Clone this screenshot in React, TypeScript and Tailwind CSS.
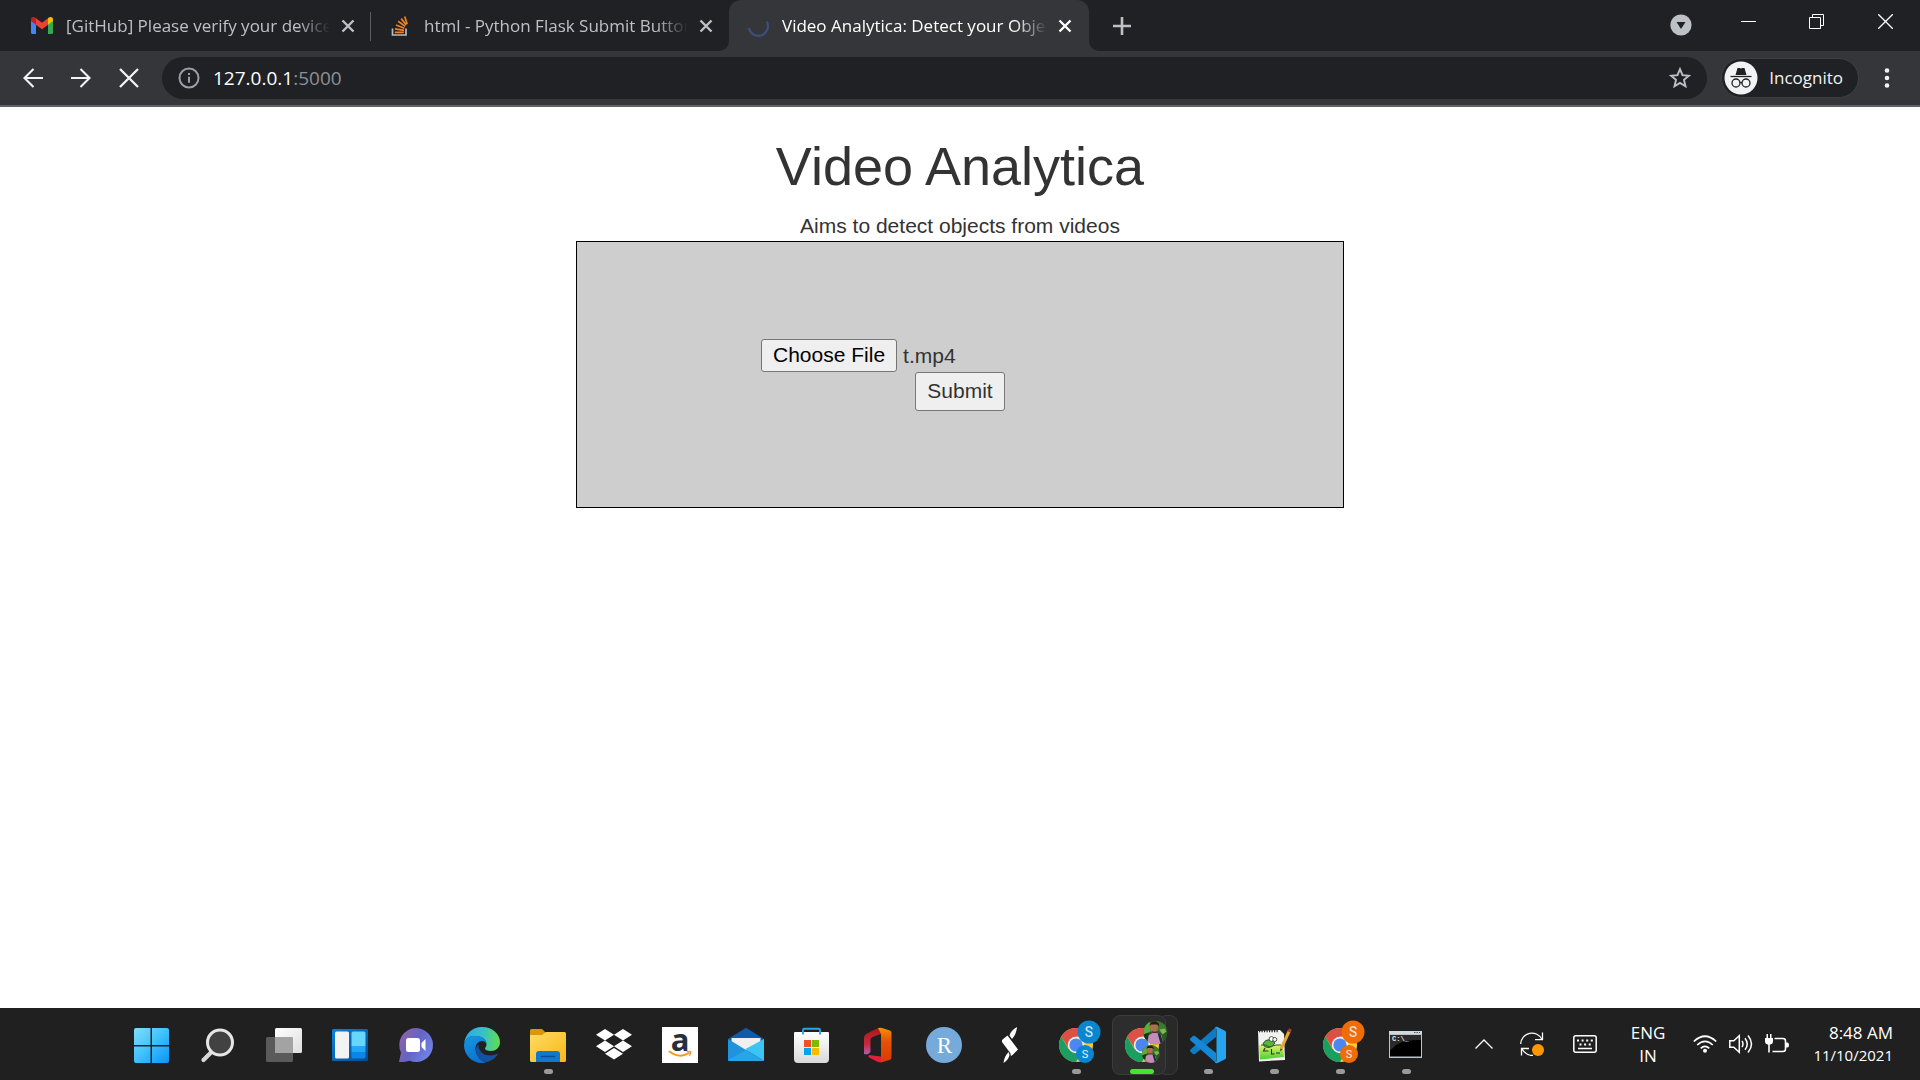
import { useState } from "react";
import type { ReactNode } from "react";

const UI = "font-['Open_Sans','Noto_Sans',sans-serif]";

function CloseGlyph() {
  return (
    <svg viewBox="0 0 14 14" className="size-[14px]" fill="none" stroke="currentColor" strokeWidth="2.4">
      <path d="M1.5 1.5l11 11M12.5 1.5l-11 11" />
    </svg>
  );
}

function GmailIcon() {
  return (
    <svg viewBox="0 0 22 17" className="h-[17px] w-[22px]">
      <path d="M0 3v12.500Q0 17 1.500 17H5V7z" fill="#4285f4" />
      <path d="M22 3v12.500Q22 17 20.500 17H17V7z" fill="#34a853" />
      <path d="M17 1.200L17 7.800 22 4V2.500C22 0 19.500-.6 17.800.6z" fill="#fbbc04" />
      <path d="M5 7.800V1.200L11 5.700 17 1.200V7.800L11 12.200z" fill="#ea4335" />
      <path d="M0 2.500V4l5 3.800V1.200L4.200.6C2.500-.6 0 0 0 2.500z" fill="#c5221f" />
    </svg>
  );
}

function StackOverflowIcon() {
  return (
    <svg viewBox="0 0 18 20" className="h-[20px] w-[18px]" fill="none" strokeWidth="1.700">
      <path d="M1.500 12.500V19h13.500v-6.500" stroke="#bcbbbb" />
      <path d="M3.800 16.400h9M4 12.800l9 1.500M5 9l8.300 3.300M7.200 5.200l7 5.200M10.200 2.600l5 6.300M13.700.6l2.500 7.600" stroke="#f48024" />
    </svg>
  );
}

function Spinner() {
  return (
    <svg viewBox="0 0 24 24" className="size-[24px]" fill="none" stroke="#3c4f7c" strokeWidth="2.400">
      <path d="M2 14A10.500 10.500 0 1 0 21.500 7" />
    </svg>
  );
}

function Tab({ icon, title, active = false, divider = false }: { icon: ReactNode; title: string; active?: boolean; divider?: boolean }) {
  return (
    <div
      className={
        active
          ? "relative flex h-full w-[360px] items-center rounded-t-xl bg-[#35363a] pr-[17px] pl-[18px] text-white"
          : "relative flex h-full w-[358px] items-center pr-[16px] pl-[18px] text-[#bdc1c6]"
      }
    >
      {active && (
        <>
          <svg viewBox="0 0 10 10" className="absolute bottom-0 -left-[10px] size-[10px]" fill="#35363a">
            <path d="M10 0v10H0A10 10 0 0 0 10 0z" />
          </svg>
          <svg viewBox="0 0 10 10" className="absolute -right-[10px] bottom-0 size-[10px]" fill="#35363a">
            <path d="M0 0v10h10A10 10 0 0 1 0 0z" />
          </svg>
        </>
      )}
      <span className="flex w-[22px] shrink-0 justify-center">{icon}</span>
      <span className="ml-[13px] min-w-0 flex-1 overflow-hidden text-[17px] leading-6 whitespace-nowrap [mask-image:linear-gradient(to_right,#000_88%,transparent)]">
        {title}
      </span>
      <button type="button" aria-label={`Close ${title}`} className="ml-[11px] shrink-0">
        <CloseGlyph />
      </button>
      {divider && <span className="absolute top-[12px] right-0 h-[29px] w-px bg-[#5a5d61]" />}
    </div>
  );
}

function TabStrip() {
  return (
    <div className="flex h-[51px] items-center bg-[#202124] pl-[13px]">
      <Tab icon={<GmailIcon />} title="[GitHub] Please verify your device" divider />
      <Tab icon={<StackOverflowIcon />} title="html - Python Flask Submit Button" />
      <Tab icon={<Spinner />} title="Video Analytica: Detect your Objects" active />
      <button type="button" aria-label="New tab" className="ml-[24px] text-[#bdc1c6]">
        <svg viewBox="0 0 18 18" className="size-[18px]" stroke="currentColor" strokeWidth="2.600">
          <path d="M9 0v18M0 9h18" />
        </svg>
      </button>
      <div className="ml-auto flex h-full items-start text-white">
        <button type="button" aria-label="Search tabs" className="mt-[14px] mr-[49px]">
          <svg viewBox="0 0 22 22" className="size-[22px]">
            <circle cx="11" cy="11" r="10.600" fill="#bdc1c6" />
            <path d="M6.500 8h9L11 15z" fill="#202124" />
          </svg>
        </button>
        <button type="button" aria-label="Minimize" className="mt-[14px] mr-[53px]">
          <svg viewBox="0 0 15 15" className="size-[15px]" stroke="currentColor">
            <path d="M0 7.500h15" />
          </svg>
        </button>
        <button type="button" aria-label="Restore" className="mt-[14px] mr-[54px]">
          <svg viewBox="0 0 15 15" className="size-[15px]" fill="none" stroke="currentColor">
            <path d="M.5 3.500h11v11H.5zM3.500 3.500v-3h11v11h-3" />
          </svg>
        </button>
        <button type="button" aria-label="Close window" className="mt-[14px] mr-[27px]">
          <svg viewBox="0 0 15 15" className="size-[15px]" stroke="currentColor" strokeWidth="1.300">
            <path d="M0 0l15 15M15 0L0 15" />
          </svg>
        </button>
      </div>
    </div>
  );
}

function Toolbar() {
  return (
    <div className="flex h-[56px] items-center border-b-2 border-[#5f6368] bg-[#35363a] pl-[23px] text-[#f1f3f4]">
      <button type="button" aria-label="Back" className="mr-[28px]">
        <svg viewBox="0 0 20 20" className="size-[20px]" fill="none" stroke="currentColor" strokeWidth="2.100">
          <path d="M20 10H1.500M10.500 1L1.500 10l9 9" />
        </svg>
      </button>
      <button type="button" aria-label="Forward" className="mr-[28px]">
        <svg viewBox="0 0 20 20" className="size-[20px]" fill="none" stroke="currentColor" strokeWidth="2.100">
          <path d="M0 10h18.500M9.500 1l9 9-9 9" />
        </svg>
      </button>
      <button type="button" aria-label="Stop loading" className="mr-[23px]">
        <svg viewBox="0 0 20 20" className="size-[20px]" stroke="currentColor" strokeWidth="2.300">
          <path d="M1 1l18 18M19 1L1 19" />
        </svg>
      </button>
      <div className="flex h-[42px] flex-1 items-center rounded-full bg-[#202124] pr-[16px] pl-[16px]">
        <svg viewBox="0 0 22 22" className="size-[22px]" fill="none" stroke="#9aa0a6" strokeWidth="2">
          <circle cx="11" cy="11" r="9.500" />
          <path d="M11 9.800v6M11 6v2" />
        </svg>
        <a href="http://127.0.0.1:5000" className="ml-[13px] text-[19px] leading-6 text-[#8d9196]">
          <span className="text-white">127.0.0.1</span>:5000
        </a>
        <button type="button" aria-label="Bookmark this tab" className="ml-auto">
          <svg viewBox="0 0 22 22" className="size-[22px]" fill="none" stroke="#bdc1c6" strokeWidth="1.900">
            <path d="M11 2.200l2.500 6 6.400.5-4.900 4.200 1.500 6.300L11 15.900l-5.500 3.300L7 12.900 2.100 8.700l6.400-.5z" />
          </svg>
        </button>
      </div>
      <button type="button" className="ml-[14px] flex h-[40px] items-center rounded-full border border-[#3c4043] bg-[#202124] pr-[15px] pl-[2px] text-[17px] leading-6">
        <svg viewBox="0 0 34 34" className="size-[34px]">
          <circle cx="17" cy="17" r="16.500" fill="#f1f3f4" />
          <path d="M11.500 14l2-7h2l1.500.6 1.500-.6h2l2 7z" fill="#202124" />
          <path d="M6.500 15.500h21" stroke="#202124" strokeWidth="1.300" />
          <g fill="none" stroke="#202124" strokeWidth="1.300">
            <circle cx="12" cy="22" r="4" />
            <circle cx="22" cy="22" r="4" />
            <path d="M16 21.700q1-.8 2 0" />
          </g>
        </svg>
        <span className="ml-[11px]">Incognito</span>
      </button>
      <button type="button" aria-label="Menu" className="mr-[23px] ml-[18px]">
        <svg viewBox="0 0 20 20" className="size-[20px]" fill="currentColor">
          <circle cx="10" cy="2.500" r="2.300" />
          <circle cx="10" cy="10" r="2.300" />
          <circle cx="10" cy="17.500" r="2.300" />
        </svg>
      </button>
    </div>
  );
}

function Page() {
  const [fileName, setFileName] = useState("t.mp4");
  return (
    <main className="flex-1 bg-white text-center font-['Liberation_Sans',Arial,sans-serif] text-[21px] leading-[30px] text-[#333]">
      <h1 className="pt-[30px] pb-[15px] text-[54px] leading-[59px]">Video Analytica</h1>
      <p>Aims to detect objects from videos</p>
      <form className="mx-auto w-2/5 border border-black bg-[#cecece] pt-[97px] pb-[96px]" onSubmit={(e) => e.preventDefault()}>
        <div className="mx-auto flex w-[398px] items-center">
          <input
            id="video"
            type="file"
            className="peer sr-only"
            onChange={(e) => setFileName(e.target.files?.[0]?.name ?? "No file chosen")}
          />
          <label htmlFor="video" className="h-[33px] rounded-[3px] border border-[#767676] bg-[#efefef] px-[11px] text-black">
            Choose File
          </label>
          <span className="ml-[6px]">{fileName}</span>
        </div>
        <button type="submit" className="mx-auto block h-[39px] rounded-[3px] border border-[#767676] bg-[#efefef] px-[11px] pb-[2px]">
          Submit
        </button>
      </form>
    </main>
  );
}

function Icon({ children }: { children: ReactNode }) {
  return (
    <svg viewBox="0 0 36 36" className="size-[36px] overflow-visible">
      {children}
    </svg>
  );
}

function ChromeDisc() {
  return (
    <>
      <circle cx="18" cy="18" r="17" fill="#fdc93c" />
      <path d="M3.300 9.500A17 17 0 0 1 32.700 9.500H18L11 22z" fill="#dc5046" />
      <path d="M3.300 9.500A17 17 0 0 0 18 35L25.400 22.200 18 18 10.600 22.200z" fill="#1a9f60" />
      <circle cx="18" cy="18" r="8.200" fill="#f1f1f1" />
      <circle cx="18" cy="18" r="6.600" fill="#4b87ee" />
    </>
  );
}

function ChromeProfile({ color }: { color: string }) {
  return (
    <Icon>
      <ChromeDisc />
      <circle cx="31" cy="5" r="11.500" fill={color} />
      <circle cx="27" cy="27" r="9" fill={color} />
      <g fill="#e8f1f8" textAnchor="middle" fontFamily="Roboto, sans-serif">
        <text x="31" y="10" fontSize="14" fontWeight="500" opacity=".85">S</text>
        <text x="27" y="31" fontSize="11">S</text>
      </g>
    </Icon>
  );
}

function Portrait() {
  return (
    <>
      <rect width="24" height="24" fill="#2a5a22" />
      <path d="M0 6l5-5 3 2-1 8-7 4z" fill="#62a83c" />
      <path d="M13 0l9 4 1 6-5 3-4-4z" fill="#3a7a2c" />
      <path d="M16 9l5-1 2 3-4 3z" fill="#86b05c" />
      <path d="M0 14l5-2 1 5-5 3z" fill="#18341a" />
      <path d="M6.500 6Q7 2.500 11 2.500T14.500 6l-.5 4.500q-1 2.500-3 2.500T7.500 11z" fill="#a8714f" />
      <path d="M6 6q0-5 5-5t4.500 5l-2-2h-6z" fill="#2a1914" />
      <path d="M8 10.500q3 1.500 6 0l-1.500 3h-3z" fill="#4c2c20" />
      <path d="M4 24l1-9 4-2.500h5l4 2.500 2 9z" fill="#c28cbb" />
      <path d="M14 12.500l3 1.500 3 9h-3z" fill="#24283c" />
    </>
  );
}

function ChromePhoto() {
  return (
    <Icon>
      <defs>
        <clipPath id="disc"><circle cx="12" cy="12" r="12" /></clipPath>
      </defs>
      <ChromeDisc />
      <g transform="translate(19.500 -6.500)" clipPath="url(#disc)"><Portrait /></g>
      <g transform="translate(18 18) scale(.75)" clipPath="url(#disc)"><Portrait /></g>
    </Icon>
  );
}

const START = (
  <Icon>
    <defs>
      <linearGradient id="win" x1="0" y1="1" x2="35" y2="36" gradientUnits="userSpaceOnUse">
        <stop stopColor="#84dcfc" /><stop offset=".45" stopColor="#43c5fb" /><stop offset="1" stopColor="#0a93fb" />
      </linearGradient>
    </defs>
    <path d="M2 1h14.500v17H0V3q0-2 2-2zM18 1h15q2 0 2 2v15H18zM0 19.500h16.500V36H2q-2 0-2-2zM18 19.500h17V34q0 2-2 2H18z" fill="url(#win)" />
  </Icon>
);

const SEARCH = (
  <Icon>
    <path d="M12 24.500L3.500 33" stroke="#d6d9dc" strokeWidth="4.200" strokeLinecap="round" />
    <circle cx="20" cy="15.500" r="12.500" fill="#424242" stroke="#e4e6e8" strokeWidth="3" />
  </Icon>
);

const TASK_VIEW = (
  <Icon>
    <defs>
      <linearGradient id="tv" x1="0" y1="0" x2="1" y2="1"><stop stopColor="#fff" /><stop offset="1" stopColor="#dedede" /></linearGradient>
    </defs>
    <rect y="10" width="27" height="25" rx="1.500" fill="#5a5a5a" />
    <rect x="9" y="1" width="27" height="25" rx="1.500" fill="url(#tv)" />
    <path d="M9 10h17q1 0 1 1v15H10q-1 0-1-1z" fill="#a3a3a3" />
  </Icon>
);

const WIDGETS = (
  <Icon>
    <defs>
      <linearGradient id="wg" x1="0" y1="0" x2="1" y2="1"><stop stopColor="#0a83de" /><stop offset="1" stopColor="#064a8e" /></linearGradient>
    </defs>
    <rect y="2" width="36" height="32" rx="1.500" fill="url(#wg)" />
    <rect x="3" y="4.500" width="14" height="27" rx="1.500" fill="#f3f3f3" />
    <path d="M21 4.500h11q1.500 0 1.500 1.500v13H19.500V6q0-1.500 1.500-1.500z" fill="#66d6fd" />
    <path d="M19.500 19h14v6h-14z" fill="#22a7f5" />
    <path d="M19.500 25h14v5q0 1.500-1.500 1.500H21q-1.500 0-1.500-1.500z" fill="#0a86ea" />
  </Icon>
);

const CHAT = (
  <Icon>
    <defs>
      <linearGradient id="ch" x1="1" y1="8" x2="33" y2="26" gradientUnits="userSpaceOnUse">
        <stop stopColor="#9163a5" /><stop offset=".5" stopColor="#6464c4" /><stop offset="1" stopColor="#6f83e8" />
      </linearGradient>
    </defs>
    <path d="M18 1a17 17 0 1 1-6.500 32.700Q8 35 1 35l2-9.500A17 17 0 0 1 18 1z" fill="url(#ch)" />
    <rect x="8" y="11" width="14" height="14" rx="2.500" fill="#fff" />
    <path d="M23.500 16l4-4v12l-4-4z" fill="#fff" />
  </Icon>
);

const EDGE = (
  <Icon>
    <defs>
      <linearGradient id="e1" x1="0" y1="10" x2="36" y2="14" gradientUnits="userSpaceOnUse">
        <stop stopColor="#2da7e8" /><stop offset=".5" stopColor="#35c1c9" /><stop offset="1" stopColor="#62dc4d" />
      </linearGradient>
      <linearGradient id="e2" x1="4" y1="12" x2="18" y2="36" gradientUnits="userSpaceOnUse">
        <stop stopColor="#1592df" /><stop offset="1" stopColor="#0b6dce" />
      </linearGradient>
    </defs>
    <path d="M0 17C1 7 8 0 18 0c11 0 18 7.500 18 15 0 6-4.500 9-9 9-4 0-6-1.200-6-2.500 0-1.200 1.500-1.500 1.500-4C22.500 12.500 18 9 11 9 5 9 1.500 12.500 0 17z" fill="url(#e1)" />
    <path d="M0 18C1 12 6 8.700 11.500 8.700c6 0 10.500 3.300 11 8.300-1-2-2.500-3-4.500-3-4 0-8 4.500-6 11 1.500 5 5 9 10 10.500-2 .5-3 .5-4 .5C8 36 0 28 0 18z" fill="url(#e2)" />
    <path d="M14.500 17.500C12 19 11 23 13 27.500c2 4.500 6 7.500 9.500 7.800 5-1.300 8.500-4 11-7.300.4-.8-.2-1.300-1-.9-2 1-4 1.400-6.500 1.400-7 0-12-5-11.500-11z" fill="#1352a0" />
  </Icon>
);

const FOLDER = (
  <Icon>
    <defs>
      <linearGradient id="fo" x1="0" y1="0" x2="1" y2="1"><stop stopColor="#ffdc66" /><stop offset="1" stopColor="#f8b716" /></linearGradient>
    </defs>
    <path d="M1.500 2H12l4 4v6H0V3.500Q0 2 1.500 2z" fill="#dc9706" />
    <path d="M0 8h12l4-3h18.500q1.500 0 1.500 1.500v27q0 1.500-1.500 1.500h-33Q0 35 0 33.500z" fill="url(#fo)" />
    <path d="M6 35v-8q0-3 3-3h18q3 0 3 3v8z" fill="#1278cf" />
    <path d="M11.500 29.500h13" stroke="#0b4d92" strokeWidth="1.500" strokeLinecap="round" />
  </Icon>
);

const DROPBOX = (
  <Icon>
    <path d="M9 2l9 5.700-9 5.700L0 7.700zM27 2l9 5.700-9 5.700-9-5.700zM9 13.500l9 5.700-9 5.700-9-5.700zM27 13.500l9 5.700-9 5.700-9-5.700zM18 21l9 5.700-9 5.700-9-5.700z" fill="#fff" />
  </Icon>
);

const AMAZON = (
  <Icon>
    <rect width="36" height="36" fill="#fff" />
    <text x="18" y="24" textAnchor="middle" fontSize="31" fontWeight="700" fontFamily="Open Sans, sans-serif" fill="#25303f">a</text>
    <path d="M7.500 24.500q10 7.500 19.500 1.500" fill="none" stroke="#f7981d" strokeWidth="2" strokeLinecap="round" />
    <path d="M24.500 24.800q4-1 4.300 0 .2 1.500-1.500 4" fill="none" stroke="#f7981d" strokeWidth="1.300" />
  </Icon>
);

const MAIL = (
  <Icon>
    <path d="M0 12L18 .8 36 12v6H0z" fill="#0d5cab" />
    <path d="M3.500 11h29v9L18 24 3.500 20z" fill="#f0f0f0" />
    <path d="M36 12v22L17 22.300z" fill="#3cc5f4" />
    <path d="M0 12l36 22H1.500Q0 34 0 32.500z" fill="#1f93dc" />
    <path d="M36 34L18 23 0 33q.4 1 1.500 1z" fill="#28a4e8" />
  </Icon>
);

const STORE = (
  <Icon>
    <defs>
      <linearGradient id="st" x1="0" y1="0" x2="0" y2="1"><stop stopColor="#fff" /><stop offset="1" stopColor="#d9d9d9" /></linearGradient>
    </defs>
    <path d="M1 5h33q1 0 1 1v26q0 4-4 4H4q-4 0-4-4V6q0-1 1-1z" fill="url(#st)" />
    <path d="M9 7.500V3q0-1.200 1.200-1.200h14.600Q26 1.800 26 3v4.500" fill="none" stroke="#26a6ea" strokeWidth="1.900" />
    <path d="M10 13h7v7h-7z" fill="#f25022" /><path d="M18 13h7v7h-7z" fill="#7fba00" />
    <path d="M10 21h7v7h-7z" fill="#00a4ef" /><path d="M18 21h7v7h-7z" fill="#ffb900" />
  </Icon>
);

const OFFICE = (
  <Icon>
    <defs>
      <linearGradient id="o1" x1="0" y1="0" x2="0" y2="1"><stop stopColor="#a81717" /><stop offset=".6" stopColor="#c42a3e" /><stop offset="1" stopColor="#b35cb0" /></linearGradient>
      <linearGradient id="o2" x1="0" y1="0" x2="0" y2="1"><stop stopColor="#f29100" /><stop offset=".4" stopColor="#e35205" /><stop offset="1" stopColor="#d83b01" /></linearGradient>
    </defs>
    <path d="M18 1L8 6Q4 8 4 11v16q4 1.500 6.500-2V13q0-2 2-3l8.500-3V1z" fill="url(#o1)" />
    <path d="M18 1q2-.6 4 0l8 2.500q1.500.6 1.500 2.500v24q0 2.300-2 3L21 35.500V7z" fill="url(#o2)" />
    <path d="M9 28l12 1.500v6q-2 0-3.500-.7L9 30.500q-1.500-1.500 0-2.500z" fill="#e3203b" />
  </Icon>
);

const RSTUDIO = (
  <Icon>
    <circle cx="18" cy="18" r="18" fill="#75aadb" />
    <text x="18.500" y="25.500" textAnchor="middle" fontSize="23" fontFamily="Liberation Serif, serif" fill="#fff">R</text>
  </Icon>
);

const STITCH = (
  <Icon>
    <path d="M10 13l5.500-4.500L26 22.500 20.500 28 19 29q0-3-3-6l-6-8z" fill="#fff" />
    <path d="M17.500 8.500Q19 3 25 0q-.5 7-5 12zM16.500 25q1 2 1 3.500Q16 33 11.500 36q.5-6 5-11z" fill="#fff" />
  </Icon>
);

const VSCODE = (
  <Icon>
    <path d="M26 0v10L5 27q-1 .6-2 0l-2.500-2.200q-1-1.300 0-2.300z" fill="#0f7bc4" />
    <path d="M26 36V26L5 9q-1-.6-2 0L.5 11.200q-1 1.300 0 2.300z" fill="#1488d4" />
    <path d="M26 0q.8-.4 1.500 0L35 3.700q1 .5 1 1.600v25.400q0 1.100-1 1.600L27.500 36q-1.500.5-2.800-.8 1.800.5 1.800-1.700v-31Q26.500.5 24.500 1z" fill="#25a5f0" />
  </Icon>
);

const NOTEPAD = (
  <Icon>
    <defs>
      <linearGradient id="np" x1="0" y1="0" x2="0" y2="1"><stop stopColor="#e8f26a" /><stop offset="1" stopColor="#42cf33" /></linearGradient>
    </defs>
    <path d="M2 4l22-1 4 4 1 26-26 1.500z" fill="#f2f2ee" />
    <path d="M3 18h24l1 12-24 2.500z" fill="url(#np)" />
    <path d="M3 4h20" stroke="#222" strokeWidth="2.500" strokeDasharray="1.200 1.300" />
    <path d="M7 17q2-5 8-4l4 3q-3 5-7 4.500-4 0-5-3.500z" fill="#52b83f" stroke="#2c5a1e" strokeWidth="1" />
    <path d="M5 18h5l3 2 7-2h5" fill="none" stroke="#3e5a22" strokeWidth="1" />
    <circle cx="15.500" cy="12" r="2.400" fill="#fff" stroke="#333" strokeWidth=".8" />
    <circle cx="18.800" cy="12.500" r="2" fill="#fff" stroke="#333" strokeWidth=".8" />
    <path d="M9 21l-1.500 3h5M15.500 22v5h3M20 26h4" fill="none" stroke="#25351c" strokeWidth="1.100" />
    <path d="M25 22L33.500 3.500" stroke="#e8a92b" strokeWidth="3" />
    <path d="M33 5l1.500-3" stroke="#b5342e" strokeWidth="3" />
    <path d="M24.200 24.500l.3-3 2 1z" fill="#333" />
  </Icon>
);

const TERMINAL = (
  <Icon>
    <rect x="1" y="4" width="33" height="27" fill="#b9c3ca" />
    <path d="M1 4h33v3H1z" fill="#cfd9de" />
    <path d="M26 5.500h6" stroke="#4b5a66" strokeDasharray="1.500 1" />
    <rect x="2" y="8" width="31" height="21.500" fill="#000" />
    <path d="M2 8h31v5Q12 12 5 21l-3 2z" fill="#2b2b2b" />
    <text x="4" y="14" fontSize="7" fontFamily="Liberation Mono, monospace" fontWeight="700" fill="#e8e8e8">C:\_</text>
  </Icon>
);

const APPS: { name: string; icon: ReactNode; running?: boolean; active?: boolean }[] = [
  { name: "Start", icon: START },
  { name: "Search", icon: SEARCH },
  { name: "Task view", icon: TASK_VIEW },
  { name: "Widgets", icon: WIDGETS },
  { name: "Chat", icon: CHAT },
  { name: "Edge", icon: EDGE },
  { name: "File Explorer", icon: FOLDER, running: true },
  { name: "Dropbox", icon: DROPBOX },
  { name: "Amazon", icon: AMAZON },
  { name: "Mail", icon: MAIL },
  { name: "Store", icon: STORE },
  { name: "Office", icon: OFFICE },
  { name: "RStudio", icon: RSTUDIO },
  { name: "Notes", icon: STITCH },
  { name: "Chrome, first profile", icon: <ChromeProfile color="#0a86d1" />, running: true },
  { name: "Chrome, current profile", icon: <ChromePhoto />, active: true },
  { name: "Visual Studio Code", icon: VSCODE, running: true },
  { name: "Notepad++", icon: NOTEPAD, running: true },
  { name: "Chrome, third profile", icon: <ChromeProfile color="#f06c05" />, running: true },
  { name: "Command Prompt", icon: TERMINAL, running: true },
];

function Tray() {
  return (
    <div className="ml-auto flex h-full items-center pr-[27px] text-white">
      <button type="button" aria-label="Show hidden icons" className="mr-[27px]">
        <svg viewBox="0 0 18 10" className="h-[10px] w-[18px]" fill="none" stroke="currentColor" strokeWidth="1.300">
          <path d="M.5 9.500L9 1l8.500 8.500" />
        </svg>
      </button>
      <button type="button" aria-label="Updates available" className="mr-[29px]">
        <svg viewBox="0 0 24 24" className="size-[24px]" fill="none" stroke="currentColor" strokeWidth="1.300">
          <path d="M.7 12A11.200 11.200 0 0 1 22 7.500M22.500.5v7.200h-7.500M1.500 23.500v-7H9M2 17q4 6.500 11 6.500" />
          <circle cx="18" cy="18" r="6" fill="#ff9800" stroke="none" />
        </svg>
      </button>
      <button type="button" aria-label="Touch keyboard" className="mr-[34px]">
        <svg viewBox="0 0 24 18" className="h-[18px] w-[24px]" fill="none" stroke="currentColor" strokeWidth="1.500">
          <rect x=".8" y=".8" width="22.400" height="16.400" rx="2" />
          <path d="M4 5.500h16M6.500 9.500h12" strokeDasharray="2 2.600" strokeWidth="1.900" />
          <path d="M5 13.500h14" />
        </svg>
      </button>
      <button type="button" className="mr-[28px] text-center text-[17px] leading-[23px]">
        ENG
        <br />
        IN
      </button>
      <button type="button" aria-label="Network, volume and battery" className="mr-[24px] flex items-center gap-[12px]">
        <svg viewBox="0 0 24 18" className="h-[18px] w-[24px]" fill="none" stroke="currentColor" strokeWidth="1.700">
          <path d="M.8 6.500q11.200-10.500 22.400 0M4.200 10q7.800-7.200 15.600 0M7.700 13.300q4.300-4 8.600 0" />
          <circle cx="12" cy="15.700" r="2" fill="currentColor" stroke="none" />
        </svg>
        <svg viewBox="0 0 24 20" className="h-[20px] w-[24px]" fill="none" stroke="currentColor" strokeWidth="1.500">
          <path d="M.8 6.800h4l5.500-5v16.400l-5.500-5h-4zM13 7q2 3 0 6M16 4.200q4.500 5.800 0 11.600M19 1.500q7 8.500 0 17" />
        </svg>
        <svg viewBox="0 0 24 20" className="h-[20px] w-[24px]" fill="none" stroke="currentColor" strokeWidth="1.600">
          <path d="M9.500 4.500H18q2.500 0 2.500 2.500v8q0 2.500-2.500 2.500H7.500M4 8v10.500" />
          <path d="M0 4h8v3q0 3-2.500 3.500h-3Q0 10 0 7zM1.500 0h1.500v4H1.500zM5 0h1.500v4H5zM21 8.500h1.500q1.500 0 1.500 2.500t-1.500 2.500H21z" fill="currentColor" stroke="none" />
        </svg>
      </button>
      <button type="button" className="text-right leading-[23px]">
        <span className="block text-[17px]">8:48 AM</span>
        <span className="block text-[15px]">11/10/2021</span>
      </button>
    </div>
  );
}

function Taskbar() {
  return (
    <footer className="flex h-[72px] items-center bg-[#202020] pl-[119px]">
      {APPS.map((app) => (
        <button key={app.name} type="button" aria-label={app.name} className="relative flex h-full w-[66px] items-center justify-center pt-[2px]">
          {app.active && (
            <>
              <span className="absolute top-[7px] -right-[3px] h-[60px] w-[20px] rounded-lg border border-[#3a3a3a] bg-[#292929]" />
              <span className="absolute top-[7px] left-[3px] h-[60px] w-[54px] rounded-lg border border-[#3c3c3c] bg-[#2d2d2d]" />
              <span className="absolute bottom-[6px] left-[21px] h-[5px] w-[24px] rounded-full bg-[#46e52f]" />
            </>
          )}
          <span className="relative">{app.icon}</span>
          {app.running && <span className="absolute bottom-[6px] left-[29px] h-[5px] w-[9px] rounded-full bg-[#9a9a9a]" />}
        </button>
      ))}
      <Tray />
    </footer>
  );
}

export default function App() {
  return (
    <div className={`flex min-h-screen flex-col ${UI}`}>
      <header>
        <TabStrip />
        <Toolbar />
      </header>
      <Page />
      <Taskbar />
    </div>
  );
}
